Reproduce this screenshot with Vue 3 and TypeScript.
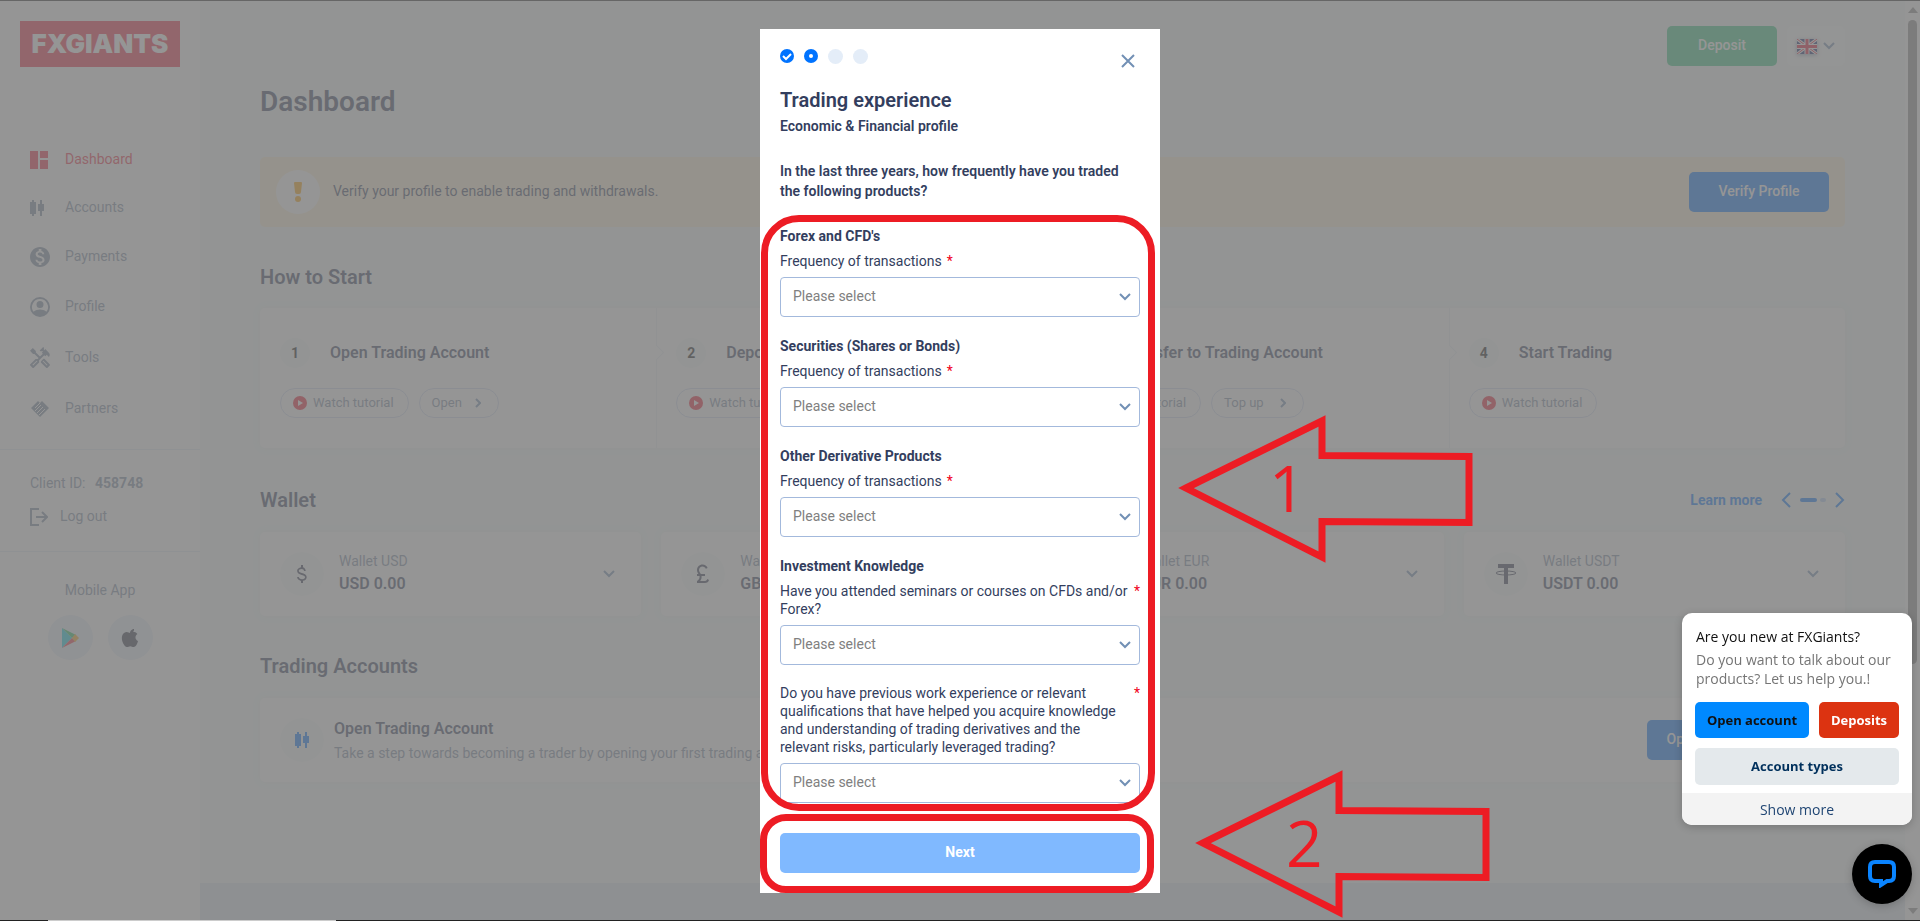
<script setup lang="ts">
import { ref } from 'vue'

interface NavItem { label: string; icon: string; size: number; box: string; active?: boolean }
interface Step { title: string; action?: string; wide?: boolean }
interface Wallet { code: string; icon: string }
interface Question { id: string; heading?: string; label: string }

const icons: Record<string, string> = {
  dashboard: 'M3 3h8v18H3zM13 3h8v7h-8zM13 12h8v9h-8z',
  candles: 'M2 2h2V0h2v2h2v12H6v2H4v-2H2zM10 4h2V0h2v4h2v7h-2v5h-2v-5h-2z',
  payments: 'M12 2C6.48 2 2 6.48 2 12s4.48 10 10 10 10-4.48 10-10S17.52 2 12 2zm1.41 16.09V20h-2.67v-1.93c-1.71-.36-3.16-1.46-3.27-3.4h1.96c.1 1.05.82 1.87 2.65 1.87 1.96 0 2.4-.98 2.4-1.59 0-.83-.44-1.61-2.67-2.14-2.48-.6-4.18-1.62-4.18-3.67 0-1.72 1.39-2.84 3.11-3.21V4h2.67v1.95c1.86.45 2.79 1.86 2.85 3.39H14.3c-.05-1.11-.64-1.87-2.22-1.87-1.5 0-2.4.68-2.4 1.64 0 .84.65 1.39 2.67 1.91s4.18 1.39 4.18 3.91c-.01 1.83-1.38 2.83-3.12 3.16z',
  profile: 'M12 2a10 10 0 1 0 0 20 10 10 0 0 0 0-20zm0 2a8 8 0 0 1 6.4 12.8C17 15.200 14 14.500 12 14.500s-5 .7-6.400 2.300A8 8 0 0 1 12 4zm0 2a3.500 3.500 0 1 0 0 7 3.500 3.500 0 0 0 0-7z',
  tools: 'M21.670 18.170l-5.300-5.300h-.990l-2.540 2.540v.990l5.300 5.300c.390.390 1.020.390 1.410 0l2.120-2.120c.390-.380.390-1.020 0-1.410zm-2.830 1.420l-4.240-4.240.710-.710 4.240 4.240zM17.340 10.190l1.410-1.410 2.120 2.120c1.170-1.170 1.170-3.070 0-4.240l-3.540-3.540-1.410 1.410V1.710L15.220 1l-3.540 3.540.710.710h2.830l-1.410 1.410 1.060 1.060-2.890 2.890-4.130-4.130V5.060L4.830 2.040 2 4.870 5.030 7.900h1.410l4.130 4.130-.850.850H7.600l-5.300 5.300c-.390.390-.390 1.020 0 1.410l2.120 2.120c.390.390 1.020.390 1.410 0l5.300-5.300v-2.120l5.150-5.150zM9.360 15.340l-4.240 4.240-.710-.710 4.240-4.240z',
}

const nav: NavItem[] = [
  { label: 'Dashboard', icon: 'dashboard', size: 18, box: '3 3 18 18', active: true },
  { label: 'Accounts', icon: 'candles', size: 18, box: '2 -1 18 18' },
  { label: 'Payments', icon: 'payments', size: 20, box: '2 2 20 20' },
  { label: 'Profile', icon: 'profile', size: 20, box: '2 2 20 20' },
  { label: 'Tools', icon: 'tools', size: 22, box: '2 1 22 22' },
  { label: 'Partners', icon: 'partners', size: 20, box: '0 0 20 20' },
]

const steps: Step[] = [
  { title: 'Open Trading Account', action: 'Open' },
  { title: 'Deposit Funds', action: 'Deposit' },
  { title: 'Transfer to Trading Account', action: 'Top up', wide: true },
  { title: 'Start Trading' },
]

const wallets: Wallet[] = [
  { code: 'USD', icon: 'M11.8 10.900c-2.270-.590-3-1.200-3-2.150 0-1.090 1.010-1.850 2.700-1.850 1.780 0 2.440.850 2.500 2.100h1.710c-.070-1.720-1.120-3.300-2.710-3.810V3h-2v2.160c-1.940.420-3.900 1.680-3.900 3.610 0 2.310 1.910 3.460 4.700 4.130 2.500.600 3.300 1.480 3.300 2.410 0 .690-.790 1.890-3 1.890-2.060 0-3.170-.920-3.280-2.100H7.100c.120 2.190 1.760 3.420 3.900 3.830V21h2v-2.150c1.950-.370 3.700-1.500 3.700-3.550 0-2.840-2.630-3.810-4.900-4.400z' },
  { code: 'GBP', icon: 'M14 21c1.930 0 3.620-1.170 4-3l-1.750-.880C16 18.210 15.330 19 14 19H9.100c.830-1 1.500-2.340 1.500-4 0-.350-.030-.690-.080-1H14v-2H9.820C9 10.420 8 9.600 8 8c0-1.930 1.570-3.500 3.500-3.500 1.500 0 2.790.950 3.280 2.280L16.630 6c-.800-2.050-2.790-3.500-5.130-3.500C8.460 2.500 6 4.960 6 8c0 1.780.790 2.900 1.490 4H6v2h2.470c.080.310.130.640.130 1 0 2.700-2.600 4-2.600 4v2h8z' },
  { code: 'EUR', icon: 'M15 18.500a6.480 6.480 0 0 1-5.740-3.500H15v-2H8.580a6.500 6.500 0 0 1 0-2H15V9H9.240A6.490 6.490 0 0 1 15 5.500c1.610 0 3.090.590 4.230 1.570L21 5.300A9 9 0 0 0 6.520 9H3v2h3.060a9 9 0 0 0 0 2H3v2h3.520A9 9 0 0 0 21 18.700l-1.780-1.770A6.400 6.400 0 0 1 15 18.500z' },
  { code: 'USDT', icon: 'M4 2h16v4h-6v16h-4V6H4z' },
]

const questions: Question[] = [
  { id: 'forex', heading: "Forex and CFD's", label: 'Frequency of transactions' },
  { id: 'securities', heading: 'Securities (Shares or Bonds)', label: 'Frequency of transactions' },
  { id: 'derivatives', heading: 'Other Derivative Products', label: 'Frequency of transactions' },
  { id: 'seminars', heading: 'Investment Knowledge', label: 'Have you attended seminars or courses on CFDs and/or Forex?' },
  { id: 'experience', label: 'Do you have previous work experience or relevant qualifications that have helped you acquire knowledge and understanding of trading derivatives and the relevant risks, particularly leveraged trading?' },
]

const answers = ref<Record<string, string>>({
  forex: '', securities: '', derivatives: '', seminars: '', experience: '',
})
</script>

<template>
  <div class="page">
    <aside class="sidebar">
      <a href="#" class="logo">FXGIANTS</a>
      <nav class="nav">
        <a v-for="item in nav" :key="item.label" href="#" class="nav-item" :class="{ active: item.active }">
          <svg v-if="item.icon === 'partners'" width="20" height="20" viewBox="0 0 20 20">
            <path d="M1 9L8 2l2 2 2-2 7 7-9 9z" fill="currentColor" />
            <path d="M10 4l-5 5M5 12l6-6M7 14l6-6M9 16l6-6" class="cut" />
          </svg>
          <svg v-else :width="item.size" :height="item.size" :viewBox="item.box">
            <path :d="icons[item.icon]" fill="currentColor" fill-rule="evenodd" />
          </svg>
          <span>{{ item.label }}</span>
        </a>
      </nav>
      <div class="client">
        <p>Client ID: <b>458748</b></p>
        <a href="#" class="logout">
          <svg width="18" height="18" viewBox="0 0 18 18" fill="none" stroke="currentColor" stroke-width="2">
            <path d="M9 1H1v16h8M6 9h11M12 4l5 5-5 5" />
          </svg>
          <span>Log out</span>
        </a>
      </div>
      <div class="apps">
        <p>Mobile App</p>
        <div class="stores">
          <a href="#" class="store" aria-label="Google Play">
            <svg width="18" height="20" viewBox="0 0 18 20">
              <path d="M1 0v20l10-10z" fill="#10d0e0" />
              <path d="M1 0l14 7-4 3z" fill="#20c060" />
              <path d="M1 20l14-7-4-3z" fill="#f03040" />
              <path d="M14 6l4 4-4 4-3-4z" fill="#f8a818" />
            </svg>
          </a>
          <a href="#" class="store" aria-label="App Store">
            <svg width="18" height="20" viewBox="3 1 18 20">
              <path d="M18.700 17.500c-.800 1.200-1.700 2.500-3.100 2.500-1.300 0-1.800-.800-3.300-.800s-2 .800-3.300.800c-1.300.100-2.300-1.300-3.100-2.500C4.200 15 3 10.500 4.700 7.500c.900-1.500 2.400-2.400 4-2.500 1.300 0 2.500.900 3.300.900s2.300-1.100 3.800-.900c.600 0 2.500.200 3.600 2-2.900 1.900-2.400 5.700.600 7-.300 1.200-.700 2.400-1.300 3.500zM13 3.500C13.700 2.700 14.900 2 16 2c.100 1.200-.300 2.400-1 3.200-.700.800-1.800 1.500-3 1.400-.100-1.200.400-2.400 1-3.100z" fill="#2a2f40" />
            </svg>
          </a>
        </div>
      </div>
    </aside>

    <div class="main">
      <div class="content">
        <header class="topbar">
          <button class="btn green">Deposit</button>
          <button class="lang" aria-label="Language">
            <svg class="flag" width="20" height="15" viewBox="0 0 20 15">
              <path d="M0 0h20v15H0z" fill="#0a1f6b" />
              <path d="M0 0l20 15M20 0L0 15" stroke="#fff" stroke-width="3" />
              <path d="M0 0l20 15M20 0L0 15" stroke="#e01030" stroke-width="1" />
              <path d="M10 0v15M0 7.500h20" stroke="#fff" stroke-width="5" />
              <path d="M10 0v15M0 7.500h20" stroke="#e01030" stroke-width="3" />
            </svg>
            <svg class="chev" width="12" height="8" viewBox="0 0 12 8"><path d="M1 1l5 5 5-5" /></svg>
          </button>
        </header>

        <h1>Dashboard</h1>

        <section class="alert">
          <span class="alert-icon">
            <svg width="8" height="20" viewBox="0 0 8 20" fill="#ffa200">
              <path d="M1 0h6q1 0 1 1L7 10q0 2-2 2H3q-2 0-2-2L0 1q0-1 1-1z" /><circle cx="4" cy="17" r="3" />
            </svg>
          </span>
          <p>Verify your profile to enable trading and withdrawals.</p>
          <button class="btn blue">Verify Profile</button>
        </section>

        <h2 class="start-head">How to Start</h2>
        <section class="steps card">
          <div v-for="(step, i) in steps" :key="step.title" class="step">
            <div class="step-title"><span class="num">{{ i + 1 }}</span><h3>{{ step.title }}</h3></div>
            <div class="pills">
              <button class="pill">
                <svg width="14" height="14" viewBox="0 0 14 14"><circle cx="7" cy="7" r="7" fill="#f01830" /><path d="M5 4l5 3-5 3z" fill="#fff" /></svg>
                Watch tutorial
              </button>
              <button v-if="step.action" class="pill action" :class="{ wide: step.wide }">
                {{ step.action }}
                <svg width="6" height="10" viewBox="0 0 6 10"><path d="M1 1l4 4-4 4" /></svg>
              </button>
            </div>
          </div>
        </section>

        <div class="wallet-head">
          <h2>Wallet</h2>
          <a href="#">Learn more</a>
          <div class="pager">
            <button aria-label="Previous"><svg width="10" height="16" viewBox="0 0 10 16"><path d="M9 1L2 8l7 7" /></svg></button>
            <i class="dash"></i><i class="dot"></i>
            <button aria-label="Next wallets"><svg width="10" height="16" viewBox="0 0 10 16"><path d="M1 1l7 7-7 7" /></svg></button>
          </div>
        </div>
        <section class="wallets">
          <div v-for="w in wallets" :key="w.code" class="wallet card">
            <span class="round">
              <svg v-if="w.code === 'USDT'" width="24" height="24" viewBox="0 0 24 24">
                <path :d="w.icon" fill="#2f3550" />
                <ellipse cx="12" cy="11" rx="10" ry="2" fill="none" stroke="#2f3550" stroke-width="1" />
              </svg>
              <svg v-else width="24" height="24" viewBox="0 0 24 24"><path :d="w.icon" fill="#2f3550" /></svg>
            </span>
            <div class="grow"><p>Wallet {{ w.code }}</p><b>{{ w.code }} 0.00</b></div>
            <svg class="chev" width="12" height="8" viewBox="0 0 12 8"><path d="M1 1l5 5 5-5" /></svg>
          </div>
        </section>

        <h2>Trading Accounts</h2>
        <section class="account card">
          <span class="round">
            <svg width="16" height="18" viewBox="1 -1 16 18"><path :d="icons.candles" fill="#0073ff" /></svg>
          </span>
          <div class="grow">
            <h3>Open Trading Account</h3>
            <p>Take a step towards becoming a trader by opening your first trading account.</p>
          </div>
          <button class="btn blue open">Open Trading Account</button>
        </section>
      </div>
      <footer class="foot"></footer>
    </div>

    <div class="scroll">
      <svg width="10" height="6" viewBox="0 0 10 6"><path d="M5 0l5 6H0z" /></svg>
      <div class="thumb"></div>
      <svg width="10" height="6" viewBox="0 0 10 6"><path d="M5 6l5-6H0z" /></svg>
    </div>
  </div>

  <div class="backdrop">
    <form class="modal" @submit.prevent>
      <div class="modal-top">
        <div class="dots">
          <svg width="14" height="14" viewBox="0 0 14 14"><circle cx="7" cy="7" r="7" fill="#0073ff" /><path d="M3 7l3 3 5-5" fill="none" stroke="#fff" stroke-width="2" /></svg>
          <svg width="14" height="14" viewBox="0 0 14 14"><circle cx="7" cy="7" r="7" fill="#0073ff" /><circle cx="7" cy="7" r="2" fill="#fff" /></svg>
          <i></i><i></i>
        </div>
        <button type="button" class="close" aria-label="Close">
          <svg width="14" height="14" viewBox="0 0 14 14"><path d="M1 1l12 12M13 1L1 13" /></svg>
        </button>
      </div>
      <h2 class="modal-title">Trading experience</h2>
      <p class="subtitle">Economic &amp; Financial profile</p>
      <p class="intro">In the last three years, how frequently have you traded the following products?</p>
      <div class="questions">
        <div v-for="q in questions" :key="q.id" class="question">
          <h4 v-if="q.heading">{{ q.heading }}</h4>
          <label :for="q.id"><span>{{ q.label }}</span><em>*</em></label>
          <div class="select">
            <select :id="q.id" v-model="answers[q.id]"><option value="">Please select</option></select>
            <svg width="12" height="8" viewBox="0 0 12 8"><path d="M1 1l5 5 5-5" /></svg>
          </div>
        </div>
      </div>
      <div class="submit"><button class="next">Next</button></div>

      <svg v-for="n in 2" :key="n" class="arrow" :class="'arrow-' + n" width="300" height="152" viewBox="0 0 300 152">
        <path d="M11 76L147 9v34.500l147 1v66l-147-1V145z" />
        <text x="94" y="100">{{ n }}</text>
      </svg>
    </form>
  </div>

  <aside class="chat">
    <div class="chat-body">
      <p class="chat-title">Are you new at FXGiants?</p>
      <p class="chat-text">Do you want to talk about our products? Let us help you.!</p>
      <div class="chat-buttons">
        <button class="c-open">Open account</button>
        <button class="c-dep">Deposits</button>
        <button class="c-types">Account types</button>
      </div>
    </div>
    <button class="more">Show more</button>
  </aside>
  <button class="bubble" aria-label="Chat">
    <svg width="28" height="28" viewBox="0 0 28 28"><path d="M7 2h14q5 0 5 5v9q0 5-5 5h-2l-6 4v-4H7q-5 0-5-5V7q0-5 5-5z" fill="none" stroke="#0a84ff" stroke-width="4" /></svg>
  </button>
  <div class="taskbar"></div>
</template>

<style>
html, body { height: 100%; overflow: hidden; }
</style>

<style scoped>
* { box-sizing: border-box; }
h1, h2, h3, h4, p { margin: 0; font-weight: 600; }
a { color: inherit; text-decoration: none; }
button { font: inherit; border: 0; padding: 0; background: none; cursor: pointer; }
svg { display: block; flex: none; }
.page, .modal { font-family: Roboto, sans-serif; font-size: 14px; line-height: 18px; color: #333e5e; }
.page { display: grid; grid-template-columns: 200px 1fr 15px; height: 100vh; background: #f3fbf8; }

.sidebar { background: #fff; padding-top: 21px; color: #7a8ba3; }
.sidebar p { font-weight: 400; }
.logo { display: flex; align-items: center; justify-content: center; height: 46px; margin: 0 20px; padding-bottom: 2px; background: #f02840; color: #fff; font: 900 26px Inter, sans-serif; }
.nav { display: flex; flex-direction: column; gap: 30px; padding: 84px 30px 30px; border-bottom: 1px solid #e4ecf4; }
.nav-item { display: grid; grid-template-columns: 20px 1fr; gap: 15px; align-items: center; }
.nav-item span, .logout span { line-height: 16px; padding-bottom: 2px; }
.active { color: #f02840; }
.cut { fill: none; stroke: #fff; stroke-width: 1; }
.client { padding: 24px 30px 25px; border-bottom: 1px solid #e4ecf4; }
.client b { margin-left: 6px; font-weight: 700; }
.logout { display: flex; align-items: center; gap: 12px; margin-top: 16px; }
.apps { padding-top: 29px; text-align: center; }
.stores { display: flex; justify-content: center; gap: 15px; margin-top: 16px; }
.store { display: flex; align-items: center; justify-content: center; width: 45px; height: 45px; border-radius: 50%; background: #e6eef8; }

.main { display: flex; flex-direction: column; }
.content { flex: 1; padding: 26px 60px 0; }
.topbar { display: flex; justify-content: flex-end; gap: 10px; }
.btn { height: 40px; padding-bottom: 2px; border-radius: 5px; color: #fff; font-weight: 500; }
.green { width: 110px; background: #35c880; }
.blue { width: 140px; background: #0073ff; }
.lang { display: flex; align-items: center; justify-content: center; gap: 6px; width: 58px; height: 40px; border-radius: 5px; background: #fafcfc; }
.flag { box-shadow: 0 1px 4px #8898b0; }
.chev, .select svg, .pill.action svg { fill: none; stroke: #7290b5; stroke-width: 2; }
h1 { margin-top: 18px; font-size: 28px; line-height: 36px; }
.alert { display: flex; align-items: center; gap: 13px; height: 70px; margin-top: 37px; padding: 0 16px; border-radius: 5px; background: #fff0d4; }
.alert p { flex: 1; padding-bottom: 2px; font-weight: 400; }
.alert-icon, .round { display: flex; align-items: center; justify-content: center; flex: none; width: 44px; height: 44px; border-radius: 50%; background: #fff; }
h2 { margin-top: 37px; font-size: 20px; line-height: 26px; }
.card { background: #fff; border-radius: 5px; box-shadow: 0 0 8px #e9edf2; }
.steps { display: grid; grid-template-columns: repeat(4, 1fr); height: 140px; margin-top: 18px; }
.step { position: relative; padding: 30px 20px; }
.step + .step { padding-left: 19px; border-left: 1px solid #eaf0f4; }
.step + .step::before { content: ""; position: absolute; left: -6px; top: 39px; width: 10px; height: 10px; border: solid #eaf0f4; border-width: 1px 1px 0 0; background: #fff; transform: rotate(45deg); }
.step-title { display: flex; align-items: center; gap: 20px; }
h3 { font-size: 16px; line-height: 20px; }
.num { width: 30px; border-radius: 50%; background: #f3faf8; line-height: 30px; text-align: center; font-weight: 700; color: #111; }
.pills { display: flex; gap: 10px; margin-top: 20px; }
.pill { display: flex; align-items: center; gap: 6px; height: 30px; padding: 0 14px 0 12px; border: 1px solid #cfdaf0; border-radius: 15px; color: #7a8ba3; font-size: 13px; }
.pill.action { justify-content: space-between; gap: 13px; padding-right: 17px; }
.pill.wide { min-width: 93px; }
.wallet-head { display: flex; align-items: center; margin-top: 39px; color: #0073ff; }
.wallet-head h2 { flex: 1; margin: 0; color: #333e5e; }
.wallet-head a { font-weight: 700; }
.pager { display: flex; align-items: center; gap: 3px; margin-left: 19px; }
.pager svg { fill: none; stroke: #0073ff; stroke-width: 2; }
.dash { width: 17px; height: 4px; margin-left: 6px; border-radius: 2px; background: #0073ff; }
.dot { width: 6px; height: 4px; margin-right: 6px; border-radius: 2px; background: #b0cdf5; }
.wallets { display: grid; grid-template-columns: repeat(4, 1fr); gap: 20px; margin-top: 19px; }
.wallet, .account { display: flex; align-items: center; height: 84px; padding: 0 26px 0 20px; gap: 15px; }
.round { background: #f6fbfa; }
.grow { flex: 1; }
.wallet .grow { padding-bottom: 2px; }
.grow p { color: #7a8ba3; font-weight: 400; }
.wallet b { display: block; font-size: 16px; line-height: 20px; margin-top: 4px; font-weight: 600; }
.account { margin-top: 19px; padding-right: 20px; gap: 10px; }
.account p { margin-top: 5px; }
.account .open { width: 178px; }
.foot { height: 38px; background: #dfe6f2; }

.scroll { display: flex; flex-direction: column; align-items: center; gap: 7px; padding: 7px 0; background: #fcfcfc; }
.scroll svg { fill: #8b8b8b; }
.scroll svg:last-child { margin-top: auto; }
.thumb { width: 9px; height: 71%; border-radius: 5px; background: #8b8b8b; }

.backdrop { position: fixed; inset: 0; display: flex; align-items: center; justify-content: center; background: rgba(120, 120, 120, 0.785); border-top: 1px solid #666; }
.modal { position: relative; width: 400px; padding: 20px; background: #fff; }
.modal-top { display: flex; justify-content: space-between; padding-right: 5px; }
.dots { display: flex; gap: 10px; }
.dots i { width: 15px; height: 15px; border-radius: 50%; background: #e4edf8; }
.close { margin-top: 5px; }
.close svg { fill: none; stroke: #7290b5; stroke-width: 2; }
.modal-title { margin-top: 19px; }
.subtitle { margin-top: 3px; line-height: 20px; }
.intro { margin-top: 25px; line-height: 20px; }
.questions { position: relative; display: flex; flex-direction: column; gap: 19px; margin-top: 25px; }
.questions::after, .submit::after { content: ""; position: absolute; border: 7px solid #ed1c24; pointer-events: none; }
.questions::after { inset: -11px -15px -8px -19px; border-radius: 38px; }
.submit { position: relative; margin-top: 30px; }
.submit::after { inset: -19px -14px -20px -20px; border-radius: 26px; }
h4 { margin-bottom: 6px; line-height: 20px; font-weight: 700; }
label { display: flex; gap: 5px; margin-bottom: 7px; }
em { font-style: normal; color: #f00020; }
.select { position: relative; }
select { display: block; width: 100%; height: 40px; padding: 0 12px 2px; border: 1px solid #a3b9dc; border-radius: 4px; background: #fff; color: #808080; font: inherit; appearance: none; }
.select svg { position: absolute; right: 9px; top: 16px; pointer-events: none; }
.next { display: block; width: 100%; height: 40px; padding-bottom: 2px; border-radius: 5px; background: #80b9ff; color: #fff; font-weight: 700; }
.arrow { position: absolute; left: 415px; top: 383px; fill: none; stroke: #ed1c24; stroke-width: 7; pointer-events: none; }
.arrow-2 { left: 432px; top: 738px; }
.arrow text { fill: #ed1c24; stroke: none; font: 64px "Open Sans", sans-serif; }

.chat, .bubble { position: fixed; right: 8px; box-shadow: 0 2px 8px rgba(0, 0, 0, 0.2); }
.chat { bottom: 96px; width: 230px; overflow: hidden; border-radius: 10px; background: #fff; font: 14px/19px "Open Sans", sans-serif; color: #111; }
.chat-body { padding: 14px 13px 8px; }
.chat-body p { padding-left: 1px; font-weight: 400; }
.chat-text { margin-top: 4px; color: #757575; }
.chat-buttons { display: flex; flex-wrap: wrap; gap: 10px; margin-top: 14px; font-size: 13px; font-weight: 700; }
.chat-buttons button { height: 36px; border-radius: 5px; }
.c-open { flex: 1; background: #0089ff; color: #111; }
.c-dep { width: 80px; background: #dc3311; color: #fff; }
.chat-buttons .c-types { width: 100%; height: 37px; background: #e4e9ec; color: #00305c; }
.more { display: block; width: 100%; height: 32px; background: #f3f3f3; color: #1f4573; }
.bubble { bottom: 17px; display: flex; align-items: center; justify-content: center; width: 60px; height: 60px; border-radius: 50%; background: #000; }
.taskbar { position: fixed; left: 0; right: 0; bottom: 0; height: 1px; background: linear-gradient(90deg, #222 48px, #ccc 48px 336px, #222 336px); }
</style>
